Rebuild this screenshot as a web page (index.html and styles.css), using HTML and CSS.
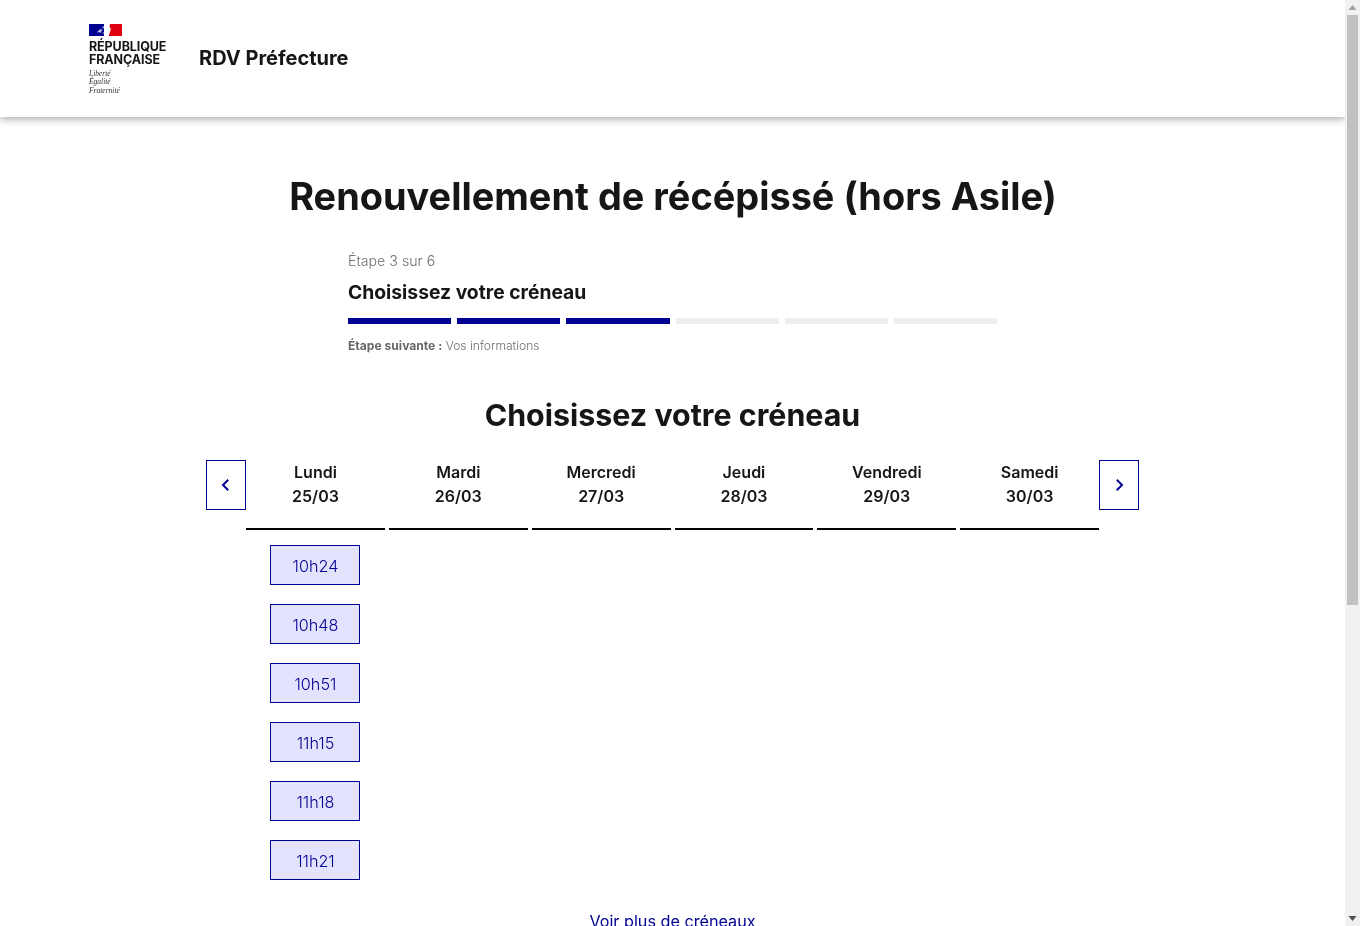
FILE: index.html
```html
<!DOCTYPE html>
<html lang="fr">
<head>
<meta charset="utf-8">
<title>RDV Préfecture</title>
<link rel="stylesheet" href="styles.css">
</head>
<body>
<div class="page">
  <header class="header">
    <div class="logo">
      <svg class="flag" width="33" height="12" viewBox="0 0 33 12">
        <rect width="33" height="12" fill="#fff"/>
        <rect width="15" height="12" fill="#000091"/>
        <rect x="20" width="13" height="12" fill="#e1000f"/>
        <path d="M20 0h1l-.5 2 .7 2 1 1.800-1 .500.1 1.300-.6.600.2 1.200-2 .600.1 2H18l.6-2.200 1-2-.3-3z" fill="#fff"/>
        <path d="M8 8.200l2.500-2.500 2.500-1-1 1.500 1.800-.2-2 1.800-.2 1.200-1.100-.8z" fill="#c8c8e4"/>
        <path d="M13 3l2-1v2l-1 1zM13 9l2-1v2z" fill="#8e8ec8"/>
      </svg>
      <p class="logo-name">RÉPUBLIQUE<br>FRANÇAISE</p>
      <p class="motto">Liberté<br>Égalité<br>Fraternité</p>
    </div>
    <p class="service">RDV Préfecture</p>
  </header>
  <main class="main">
    <h1 class="title">Renouvellement de récépissé (hors Asile)</h1>
    <section class="stepper">
      <p class="step-state">Étape 3 sur 6</p>
      <h2 class="step-title">Choisissez votre créneau</h2>
      <div class="step-bars">
        <span class="bar bar-on"></span>
        <span class="bar bar-on"></span>
        <span class="bar bar-on"></span>
        <span class="bar"></span>
        <span class="bar"></span>
        <span class="bar"></span>
      </div>
      <p class="step-next"><b>Étape suivante :</b> Vos informations</p>
    </section>
    <h2 class="cal-title">Choisissez votre créneau</h2>
    <section class="calendar">
      <button class="nav" aria-label="Précédent">
        <svg width="16" height="16" viewBox="0 0 16 16"><path d="M10.200 2.800L5 8l5.200 5.200" fill="none" stroke="#000091" stroke-width="2"/></svg>
      </button>
      <div class="days">
        <div class="day">
          <div class="day-head">Lundi<br>25/03</div>
          <div class="slots">
            <a class="slot">10h24</a>
            <a class="slot">10h48</a>
            <a class="slot">10h51</a>
            <a class="slot">11h15</a>
            <a class="slot">11h18</a>
            <a class="slot">11h21</a>
          </div>
        </div>
        <div class="day"><div class="day-head">Mardi<br>26/03</div></div>
        <div class="day"><div class="day-head">Mercredi<br>27/03</div></div>
        <div class="day"><div class="day-head">Jeudi<br>28/03</div></div>
        <div class="day"><div class="day-head">Vendredi<br>29/03</div></div>
        <div class="day"><div class="day-head">Samedi<br>30/03</div></div>
      </div>
      <button class="nav" aria-label="Suivant">
        <svg width="16" height="16" viewBox="0 0 16 16"><path d="M5.800 2.800L11 8l-5.200 5.200" fill="none" stroke="#000091" stroke-width="2"/></svg>
      </button>
    </section>
    <a class="more">Voir plus de créneaux</a>
  </main>
</div>
<div class="scrollbar">
  <svg class="arrow" width="15" height="15" viewBox="0 0 15 15"><path d="M7.500 5L11.500 10H3.500z" fill="#a0a0a0"/></svg>
  <div class="track"><div class="thumb"></div></div>
  <svg class="arrow" width="15" height="15" viewBox="0 0 15 15"><path d="M7.500 10L11.500 5H3.500z" fill="#505050"/></svg>
</div>
</body>
</html>
```
FILE: styles.css
```css
* { box-sizing: border-box; }
html, body { height: 926px; margin: 0; overflow: hidden; }
body { display: flex; background: #fff; color: #161616; font-family: "Inter", "Liberation Sans", sans-serif; }
p, h1, h2 { margin: 0; }

.page { width: 1345px; height: 926px; overflow: hidden; flex: none; will-change: opacity; }

.header { height: 117px; padding-left: 89px; display: flex; align-items: center; box-shadow: 0 2px 8px rgba(0,0,0,.35); }
.logo { width: 110px; padding-top: 2px; }
.flag { display: block; margin-bottom: 4px; }
.logo-name { font-size: 12.500px; font-weight: 700; line-height: 13px; letter-spacing: -.1px; }
.motto { font-family: "Liberation Serif", serif; font-style: italic; font-size: 7.500px; line-height: 8.500px; margin-top: 4px; color: #333; }
.service { font-size: 20px; font-weight: 700; margin-bottom: 2px; }

.main { display: flex; flex-direction: column; align-items: center; }
.title { font-size: 37.900px; line-height: 48px; font-weight: 700; margin-top: 55px; margin-left: 1px; }

.stepper { width: 649px; margin-top: 29px; }
.step-state { font-size: 14.200px; line-height: 24px; font-weight: 300; color: #707070; }
.step-title { font-size: 19.300px; line-height: 28px; font-weight: 700; margin-top: 5px; }
.step-bars { display: flex; gap: 6px; margin-top: 12px; }
.bar { flex: 1; height: 6px; background: #eee; }
.bar-on { background: #000091; }
.step-next { font-size: 12.100px; line-height: 20px; font-weight: 300; color: #707070; margin-top: 12px; }
.step-next b { color: #666; font-weight: 700; }

.cal-title { font-size: 30.400px; line-height: 40px; font-weight: 700; margin-top: 39px; }

.calendar { display: flex; align-items: flex-start; width: 933px; margin-top: 25px; margin-left: .1px; }
.nav { flex: none; width: 40px; height: 50px; padding: 0; border: 1px solid #000091; background: #fff; display: flex; align-items: center; justify-content: center; }
.days { flex: 1; display: grid; grid-template-columns: repeat(6, 1fr); gap: 4px; }
.day-head { height: 70px; border-bottom: 2px solid #000; text-align: center; font-size: 16px; line-height: 24px; font-weight: 600; }
.slots { display: flex; flex-direction: column; align-items: center; gap: 19px; padding-top: 15px; }
.slot { width: 90px; height: 40px; border: 1px solid #000091; background: #e3e3fd; color: #000091; font-size: 16.200px; font-weight: 300; line-height: 40px; text-align: center; }

.more { margin-top: 29px; color: #000091; font-size: 16.200px; line-height: 24px; }

.scrollbar { width: 15px; height: 926px; flex: none; background: #f1f1f1; display: flex; flex-direction: column; }
.arrow { display: block; flex: none; }
.track { flex: 1; padding: 0 2px; }
.thumb { height: 590px; background: #c1c1c1; }
```
